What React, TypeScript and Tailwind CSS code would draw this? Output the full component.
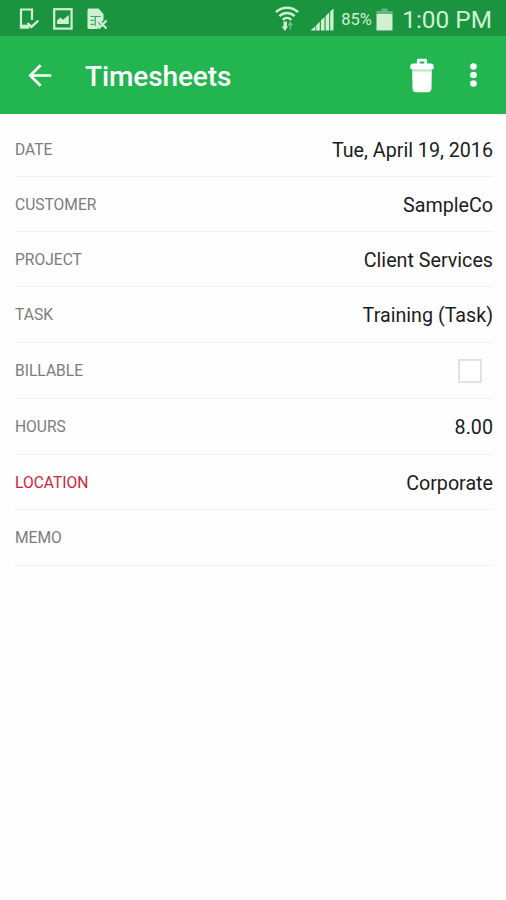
import React, { useState } from 'react';

interface Field {
  id: string;
  label: string;
  value?: string;
  type: 'TEXT' | 'CHECKBOX';
  required?: boolean;
  height: string;
}

const fields: Field[] = [
  { id: 'date', label: 'DATE', value: 'Tue, April 19, 2016', type: 'TEXT', height: 'h-[55px]' },
  { id: 'customer', label: 'CUSTOMER', value: 'SampleCo', type: 'TEXT', height: 'h-[55px]' },
  { id: 'project', label: 'PROJECT', value: 'Client Services', type: 'TEXT', height: 'h-[55px]' },
  { id: 'task', label: 'TASK', value: 'Training (Task)', type: 'TEXT', height: 'h-[56px]' },
  { id: 'billable', label: 'BILLABLE', type: 'CHECKBOX', height: 'h-[56px]' },
  { id: 'hours', label: 'HOURS', value: '8.00', type: 'TEXT', height: 'h-[56px]' },
  { id: 'location', label: 'LOCATION', value: 'Corporate', type: 'TEXT', required: true, height: 'h-[55px]' },
  { id: 'memo', label: 'MEMO', type: 'TEXT', height: 'h-[56px]' },
];

const DeviceIcon = () => (
  <svg className="w-5 h-[22px]" viewBox="0 0 20 22" fill="none" stroke="currentColor">
    <path d="M13 12V1.5H2v17" strokeWidth="2.2" />
    <path d="M.9 18.7h9.600" strokeWidth="4" />
    <path d="M8.500 15l4 3.800L19.300 12.500" strokeWidth="2.3" />
  </svg>
);

const PictureIcon = () => (
  <svg className="w-5 h-[22px]" viewBox="0 0 20 22" fill="none">
    <rect x="1.2" y="1.2" width="17.4" height="19.4" stroke="currentColor" strokeWidth="2.2" />
    <path d="M4 16V12.5l3.5-3 2.5 2.3L15.8 7v9z" fill="currentColor" />
  </svg>
);

const SimErrorIcon = () => (
  <svg className="w-[21px] h-[22px]" viewBox="0 0 21 22" fill="none">
    <path d="M2 .5h9.5L16.5 6v6l-2 2-2-1.5-1.8 1.5 2.5 3-3 4H2A1.5 1.5 0 0 1 .5 19V2A1.5 1.5 0 0 1 2 .5z" fill="currentColor" />
    <path d="M3.5 8.5h10M3.5 12.3h3.5M3.5 16.3h3.5M8.3 8.5v9.5" stroke="#1a943e" strokeWidth="1.2" strokeOpacity=".8" />
    <path d="M11.5 12.5l8 8M19.5 12.5l-8 8" stroke="currentColor" strokeWidth="2.2" />
  </svg>
);

const WifiIcon = () => (
  <svg className="w-6 h-[26px]" viewBox="0 0 24 26" fill="none">
    <path d="M1 6.2c6-6 16-6 22 0M4.4 10.2c4.4-4.2 10.800-4.2 15.2 0M7.7 13.8c2.5-2.4 6.1-2.4 8.600 0" stroke="currentColor" strokeWidth="2.4" />
    <path d="M8.500 15.500h3.500v5h1L10 25l-3.500-4.500h2z" fill="currentColor" />
    <path d="M15.3 23.5V17M13.3 19.5l2-3 2 3" stroke="currentColor" strokeOpacity=".45" strokeWidth="1.5" />
  </svg>
);

const SignalIcon = () => (
  <svg className="w-6 h-[23px]" viewBox="0 0 24 23" fill="currentColor">
    <path d="M.5 22.5L5.4 18v4.5zM6.2 17.2l3.6-3.500v8.8H6.2zM10.9 12.6l3.6-3.6v13.5h-3.6zM15.6 8l3.6-3.5v18h-3.6zM20.2 3.4L23.5.5v22h-3.3z" />
  </svg>
);

const BatteryIcon = () => (
  <svg className="w-[17px] h-[23px]" viewBox="0 0 17 23" fill="currentColor">
    <path d="M5.5 .5h6V3h-6z" fillOpacity=".4" />
    <path d="M.5 3h16v3H.5z" fillOpacity=".4" />
    <path d="M.5 6h16v16.5H.5z" />
  </svg>
);

const BackIcon = () => (
  <svg className="w-6 h-[23px]" viewBox="0 0 24 23" fill="none" stroke="currentColor" strokeWidth="2.7">
    <path d="M23.3 11.5H2.2M12.6 1.3L2.3 11.5l10.3 10.2" />
  </svg>
);

const TrashIcon = () => (
  <svg className="w-6 h-[35px]" viewBox="0 0 24 35" fill="currentColor">
    <path d="M8.3 6V2.2h7.4V6" fill="none" stroke="currentColor" strokeWidth="2.8" strokeLinejoin="round" />
    <path d="M3.5 5.5h17a3.2 3.2 0 0 1 3.2 3.2v1.6a1 1 0 0 1-1 1H1.3a1 1 0 0 1-1-1V8.7a3.2 3.2 0 0 1 3.2-3.2z" />
    <path d="M2.2 13.3h19.6l-.3 17a4 4 0 0 1-4 4h-11a4 4 0 0 1-4-4z" />
    <path d="M2.2 11h19.6v2.5H2.2z" fillOpacity=".7" />
  </svg>
);

const MoreIcon = () => (
  <svg className="w-[7px] h-6" viewBox="0 0 7 24" fill="currentColor">
    <circle cx="3.5" cy="3.5" r="3.3" />
    <circle cx="3.5" cy="12" r="3.3" />
    <circle cx="3.5" cy="20.5" r="3.3" />
  </svg>
);

export const Timesheet: React.FC = () => {
  const [billable, setBillable] = useState(false);

  return (
    <div className="w-full min-h-[900px] bg-[#fefefe] font-['Roboto',sans-serif]">
      {/* Status Bar */}
      <div className="flex items-center justify-between h-9 pl-[19px] pr-[14px] bg-[#1a943e] text-[#d0f0d4]">
        <div className="flex items-center gap-[14px] pt-0.5">
          <DeviceIcon />
          <PictureIcon />
          <SimErrorIcon />
        </div>
        <div className="flex items-center pt-0.5">
          <WifiIcon />
          <span className="ml-[11px]"><SignalIcon /></span>
          <span className="ml-[7px] pt-0.5 w-[32px] text-[16.5px] leading-none whitespace-nowrap">85%</span>
          <span className="ml-[3px]"><BatteryIcon /></span>
          <span className="ml-[9px] pt-0.5 text-[24.4px] leading-none whitespace-nowrap">1:00 PM</span>
        </div>
      </div>

      {/* App Bar */}
      <div className="flex items-center h-[78px] pl-[28px] pr-[29px] bg-[#22b550] text-white">
        <button title="Back"><BackIcon /></button>
        <h1 className="ml-[33px] pt-1 text-[28px] leading-none font-medium tracking-[-0.1px]">Timesheets</h1>
        <div className="flex items-center ml-auto gap-[36px]">
          <button title="Delete"><TrashIcon /></button>
          <button title="More"><MoreIcon /></button>
        </div>
      </div>

      {/* Fields */}
      <div className="pt-2 pl-[15px] pr-[13px]">
        {fields.map((field) => (
          <div
            key={field.id}
            className={`flex items-center justify-between border-b border-[#f1f1f1] ${field.height}`}
          >
            <span className={`pt-[3.5px] text-[15.6px] leading-none ${field.required ? 'text-[#cb2540]' : 'text-[#7c7c7c]'}`}>
              {field.label}
            </span>
            {field.type === 'CHECKBOX' ? (
              <button
                role="checkbox"
                aria-checked={billable}
                onClick={() => setBillable(!billable)}
                className={`w-6 h-6 mr-[11px] border-2 border-[#e2e2e2] ${billable ? 'bg-[#22b550]' : 'bg-white'}`}
              />
            ) : (
              <span className="pt-[3.5px] text-[19.7px] leading-none text-[#1c1c1c]">{field.value}</span>
            )}
          </div>
        ))}
      </div>
    </div>
  );
};

export default Timesheet;
